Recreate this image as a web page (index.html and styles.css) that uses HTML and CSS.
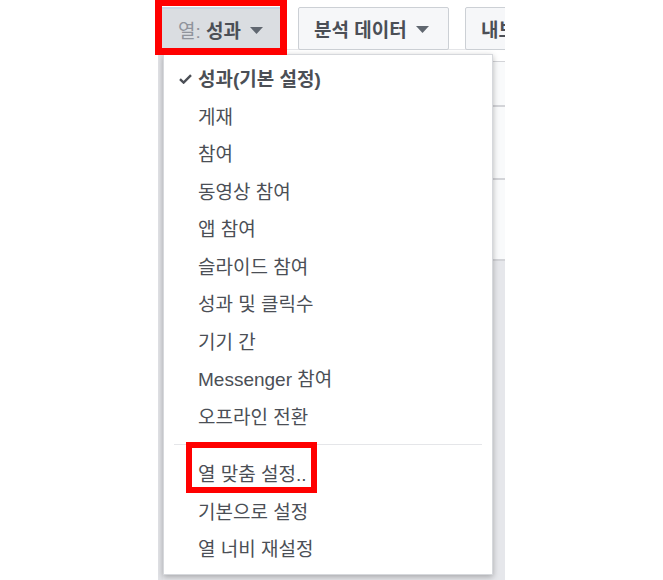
FILE: index.html
```html
<!DOCTYPE html>
<html lang="ko">
<head>
    <meta charset="UTF-8">
    <meta name="viewport" content="width=device-width, initial-scale=1.0">
    <title>열 설정</title>
    <link rel="stylesheet" href="styles.css">
</head>
<body>
    <div class="screen">
        <!-- 상단 버튼 -->
        <div class="toolbar">
            <div class="btn btn-pressed">
                <span class="label-muted">열:</span>&nbsp;<span class="label-strong">성과</span>
                <svg class="caret" width="13" height="7" viewBox="0 0 13 7"><path d="M0 0 H13 L6.5 7 Z" fill="#606770"/></svg>
            </div>
            <div class="btn btn-data">
                <span class="label-strong">분석 데이터</span>
                <svg class="caret" width="13" height="7" viewBox="0 0 13 7"><path d="M0 0 H13 L6.5 7 Z" fill="#606770"/></svg>
            </div>
            <div class="btn btn-cut">
                <span class="label-strong">내보</span>
            </div>
        </div>

        <!-- 표 배경 -->
        <div class="table">
            <div class="row row-head"></div>
            <div class="row row-a"></div>
            <div class="row row-b"></div>
            <div class="row row-c"></div>
            <div class="row-rest"></div>
        </div>

        <!-- 드롭다운 메뉴 -->
        <div class="menu">
            <div class="item item-checked">
                <svg class="check" width="13" height="10" viewBox="0 0 13 10"><path d="M1 5.2 L4.6 8.6 L12 1.2" fill="none" stroke="#4b4f56" stroke-width="2.4"/></svg>
                성과(기본 설정)
            </div>
            <div class="item">게재</div>
            <div class="item">참여</div>
            <div class="item">동영상 참여</div>
            <div class="item">앱 참여</div>
            <div class="item">슬라이드 참여</div>
            <div class="item">성과 및 클릭수</div>
            <div class="item">기기 간</div>
            <div class="item">Messenger 참여</div>
            <div class="item">오프라인 전환</div>
            <div class="divider"></div>
            <div class="item">열 맞춤 설정..</div>
            <div class="item">기본으로 설정</div>
            <div class="item">열 너비 재설정</div>
        </div>
    </div>

    <!-- 강조 표시 -->
    <div class="mark mark-top"></div>
    <div class="mark mark-menu"></div>
</body>
</html>
```

FILE: styles.css
```css
body {
    margin: 0;
    background-color: #fff;
    font-family: "Liberation Sans", "Noto Sans CJK KR", sans-serif;
    color: #4b4f56;
}

.screen {
    position: relative; /* para o menu por cima */
    margin-left: 158px;
    width: 347px;
    height: 580px;
    overflow: hidden;
    display: flex;
    flex-direction: column;
}

.toolbar {
    display: flex;
    align-items: flex-start;
    height: 50px;
    padding: 7px 0 0 2px;
    box-sizing: border-box;
    border-bottom: 1px solid #e5e6e9;
    flex-shrink: 0;
}

.btn {
    display: flex;
    align-items: center;
    height: 43px;
    box-sizing: border-box;
    padding: 0 15px;
    border: 1px solid #ccd0d5;
    border-radius: 2px;
    background-color: #f6f7f9;
    font-size: 19px;
    white-space: nowrap;
    flex-shrink: 0;
}

.btn-pressed {
    width: 124px;
    padding-left: 17px;
    background-color: #dadde1;
    border-color: #c4c8ce;
    border-top: 2px solid #c9d4e6;
}

.btn-data {
    width: 151px;
    margin-left: 14px;
    padding-left: 15px;
}

.btn-cut {
    width: 60px;
    margin-left: 16px;
}

.label-muted {
    color: #90949c;
}

.label-strong {
    font-weight: bold;
    color: #4b4f56;
}

.caret {
    margin-left: 9px;
    margin-top: 2px;
}

.table {
    flex: 1;
    display: flex;
    flex-direction: column;
    border-left: 5px solid #e2e3e7;
}

.row {
    flex-shrink: 0;
    background-color: #f9fafb;
    border-bottom: 2px solid #d3d4d8;
}

.row-head { height: 11px; border-bottom-width: 1px; background-color: #fff; }
.row-a { height: 43px; }
.row-b { height: 71px; }
.row-c { height: 79px; }

.row-rest {
    flex: 1;
    background-color: #e6e7eb;
}

.menu {
    position: absolute;
    left: 5px;
    top: 54px;
    width: 330px;
    height: 521px;
    box-sizing: border-box;
    padding: 4px 0 9px 0;
    background-color: #fff;
    border: 1px solid #d6d8dc;
    box-shadow: 0 2px 6px rgba(0, 0, 0, 0.28);
}

.item {
    position: relative;
    height: 37.5px;
    display: flex;
    align-items: center;
    padding-left: 34px;
    font-size: 19px;
    color: #4b4f56;
    white-space: nowrap;
}

.item-checked {
    font-weight: bold;
}

.check {
    position: absolute;
    left: 15px;
    top: 15px;
}

.divider {
    height: 1px;
    margin: 10px 10px 9px 10px;
    background-color: #e5e6e9;
}

.mark {
    position: absolute;
    border: 7px solid #ff0000;
    box-sizing: border-box;
}

.mark-top {
    left: 155px;
    top: -1px;
    width: 132px;
    height: 56px;
}

.mark-menu {
    left: 186px;
    top: 442px;
    width: 131px;
    height: 51px;
    border-width: 6px;
}
```
